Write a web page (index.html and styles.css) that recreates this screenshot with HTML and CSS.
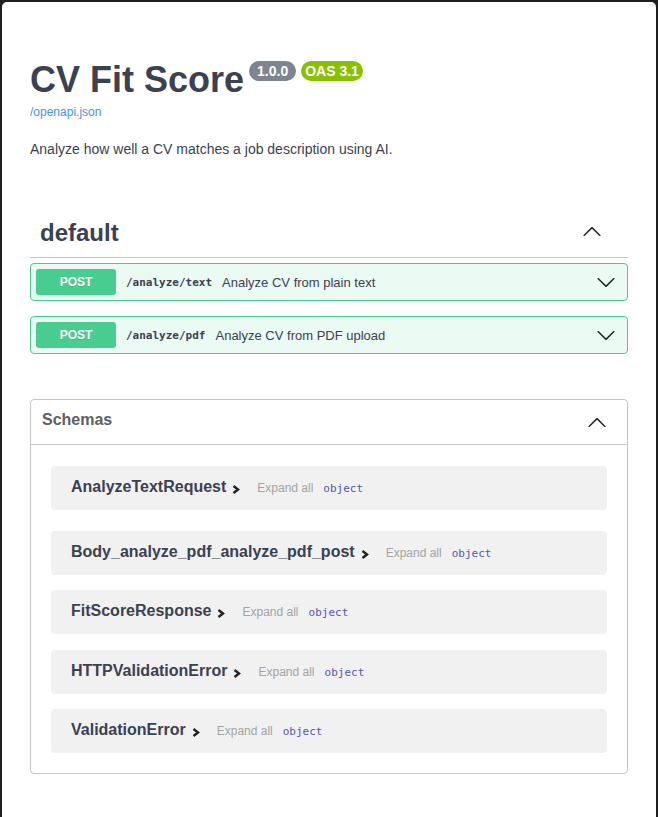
FILE: index.html
```html
<!DOCTYPE html>
<html lang="en">
<head>
    <meta charset="UTF-8">
    <title>CV Fit Score - Swagger UI</title>
    <link rel="stylesheet" href="styles.css">
</head>
<body>
    <div class="window">
        <div class="wrapper">
            <div class="info">
                <div class="title-row">
                    <h2 class="title">CV Fit Score</h2>
                    <span class="badge version">1.0.0</span>
                    <span class="badge oas">OAS 3.1</span>
                </div>
                <a class="spec-link" href="#">/openapi.json</a>
                <p class="description">Analyze how well a CV matches a job description using AI.</p>
            </div>

            <div class="tag-section">
                <div class="tag-header">
                    <h3>default</h3>
                    <svg class="arrow" width="20" height="20" viewBox="0 0 20 20"><path d="M17.418 14.908c.272.268.709.268.979 0s.271-.701 0-.969l-7.908-7.83c-.27-.268-.707-.268-.979 0l-7.908 7.83c-.27.268-.27.701 0 .969.271.268.709.268.979 0L10 7.767l7.418 7.141z"/></svg>
                </div>

                <div class="opblock">
                    <span class="method">POST</span>
                    <span class="path">/analyze/text</span>
                    <span class="summary">Analyze CV from plain text</span>
                    <svg class="arrow op-arrow" width="20" height="20" viewBox="0 0 20 20"><path d="M17.418 6.109c.272-.268.709-.268.979 0s.271.701 0 .969l-7.908 7.83c-.27.268-.707.268-.979 0l-7.908-7.83c-.27-.268-.27-.701 0-.969.271-.268.709-.268.979 0L10 13.25l7.418-7.141z"/></svg>
                </div>

                <div class="opblock">
                    <span class="method">POST</span>
                    <span class="path">/analyze/pdf</span>
                    <span class="summary">Analyze CV from PDF upload</span>
                    <svg class="arrow op-arrow" width="20" height="20" viewBox="0 0 20 20"><path d="M17.418 6.109c.272-.268.709-.268.979 0s.271.701 0 .969l-7.908 7.83c-.27.268-.707.268-.979 0l-7.908-7.83c-.27-.268-.27-.701 0-.969.271-.268.709-.268.979 0L10 13.25l7.418-7.141z"/></svg>
                </div>
            </div>

            <section class="models">
                <div class="models-header">
                    <h4>Schemas</h4>
                    <svg class="arrow" width="20" height="20" viewBox="0 0 20 20"><path d="M17.418 14.908c.272.268.709.268.979 0s.271-.701 0-.969l-7.908-7.83c-.27-.268-.707-.268-.979 0l-7.908 7.83c-.27.268-.27.701 0 .969.271.268.709.268.979 0L10 7.767l7.418 7.141z"/></svg>
                </div>
                <div class="models-body">
                    <div class="model">
                        <span class="model-name">AnalyzeTextRequest</span>
                        <svg class="model-arrow" width="8" height="9" viewBox="0 0 8 9"><polyline points="1.5,1 6,4.5 1.5,8"/></svg>
                        <span class="expand">Expand all</span>
                        <span class="type">object</span>
                    </div>
                    <div class="model">
                        <span class="model-name">Body_analyze_pdf_analyze_pdf_post</span>
                        <svg class="model-arrow" width="8" height="9" viewBox="0 0 8 9"><polyline points="1.5,1 6,4.5 1.5,8"/></svg>
                        <span class="expand">Expand all</span>
                        <span class="type">object</span>
                    </div>
                    <div class="model">
                        <span class="model-name">FitScoreResponse</span>
                        <svg class="model-arrow" width="8" height="9" viewBox="0 0 8 9"><polyline points="1.5,1 6,4.5 1.5,8"/></svg>
                        <span class="expand">Expand all</span>
                        <span class="type">object</span>
                    </div>
                    <div class="model">
                        <span class="model-name">HTTPValidationError</span>
                        <svg class="model-arrow" width="8" height="9" viewBox="0 0 8 9"><polyline points="1.5,1 6,4.5 1.5,8"/></svg>
                        <span class="expand">Expand all</span>
                        <span class="type">object</span>
                    </div>
                    <div class="model">
                        <span class="model-name">ValidationError</span>
                        <svg class="model-arrow" width="8" height="9" viewBox="0 0 8 9"><polyline points="1.5,1 6,4.5 1.5,8"/></svg>
                        <span class="expand">Expand all</span>
                        <span class="type">object</span>
                    </div>
                </div>
            </section>
        </div>
    </div>
</body>
</html>
```

FILE: styles.css
```css
html, body {
    margin: 0;
    background-color: #1f1f1f;
}

body {
    font-family: "Liberation Sans", Arial, sans-serif;
    color: #3b4151;
}

.window {
    margin: 2px 2px 0 2px;
    min-height: 815px;
    background-color: #fff;
    border-radius: 5px 5px 0 0;
}

.wrapper {
    padding: 59px 28px 0 28px;
}

/* info block */
.title-row {
    display: flex;
    align-items: flex-start;
}

.title {
    margin: 1px 0 0 0;
    font-size: 36px;
    line-height: 36px;
    font-weight: 700;
    color: #3b4151;
}

.badge {
    margin-left: 5px;
    padding: 2px 4px;
    font-size: 14px;
    line-height: 16px;
    font-weight: 700;
    color: #fff;
    border-radius: 57px;
}

.badge.version {
    padding: 2px 8px;
    background-color: #7d8492;
}

.badge.oas {
    background-color: #89bf04;
}

.spec-link {
    display: block;
    margin-top: 7px;
    font-size: 12px;
    line-height: 14px;
    color: #4990e2;
    text-decoration: none;
}

.description {
    margin: 20px 0 0 0;
    font-size: 14px;
    line-height: 20px;
}

/* operations */
.tag-section {
    margin-top: 50px;
}

.tag-header {
    display: flex;
    align-items: center;
    padding: 10px 20px 10px 10px;
    border-bottom: 1px solid rgba(59, 65, 81, 0.3);
    margin-bottom: 5px;
}

.tag-header h3 {
    flex: 1;
    margin: 0;
    font-size: 24px;
    line-height: 28px;
    font-weight: 700;
}

.arrow {
    fill: #222;
}

.tag-header .arrow {
    margin: 0 6px 4px 0;
}

.opblock {
    display: flex;
    align-items: center;
    padding: 5px;
    margin-bottom: 15px;
    border: 1px solid #49cc90;
    border-radius: 4px;
    background-color: rgba(73, 204, 144, 0.1);
}

.method {
    width: 80px;
    padding: 6px 0;
    font-size: 12px;
    line-height: 14px;
    font-weight: 700;
    text-align: center;
    color: #fff;
    background-color: #49cc90;
    border-radius: 3px;
    text-shadow: 0 1px 0 rgba(0, 0, 0, 0.1);
}

.path {
    padding: 0 10px;
    font-family: "DejaVu Sans Mono", monospace;
    font-size: 11px;
    font-weight: 600;
}

.summary {
    flex: 1;
    font-size: 13px;
}

.op-arrow {
    margin-right: 6px;
}

/* schemas */
.models {
    margin-top: 45px;
    border: 1px solid rgba(59, 65, 81, 0.3);
    border-radius: 4px;
}

.models-header {
    display: flex;
    align-items: center;
    box-sizing: border-box;
    height: 45px;
    padding: 0 20px 4px 11px;
    border-bottom: 1px solid rgba(59, 65, 81, 0.3);
}

.models-header h4 {
    flex: 1;
    margin: 0;
    font-size: 16px;
    line-height: 20px;
    font-weight: 700;
    color: #606060;
}

.models-header .arrow {
    margin-top: 4px;
}

.models-body {
    padding: 21px 20px 20px 20px;
}

.model {
    display: flex;
    align-items: baseline;
    box-sizing: border-box;
    height: 44px;
    padding: 11px 20px 0 20px;
    margin-bottom: 15px;
    background-color: rgba(0, 0, 0, 0.055);
    border-radius: 4px;
}

.model:first-child {
    margin-bottom: 21px;
}

.model:nth-child(3) {
    margin-bottom: 16px;
}

.model:last-child {
    margin-bottom: 0;
}

.model-name {
    font-size: 16px;
    line-height: 19px;
    font-weight: 700;
    color: #3b4151;
}

.model-arrow {
    align-self: flex-start;
    margin: 8px 0 0 6px;
    fill: none;
    stroke: #222;
    stroke-width: 2.4;
}

.expand {
    margin-left: 17px;
    font-size: 12px;
    color: #a3a3a3;
}

.type {
    margin-left: 10px;
    font-family: "DejaVu Sans Mono", monospace;
    font-size: 11px;
    color: #55a;
}
```
